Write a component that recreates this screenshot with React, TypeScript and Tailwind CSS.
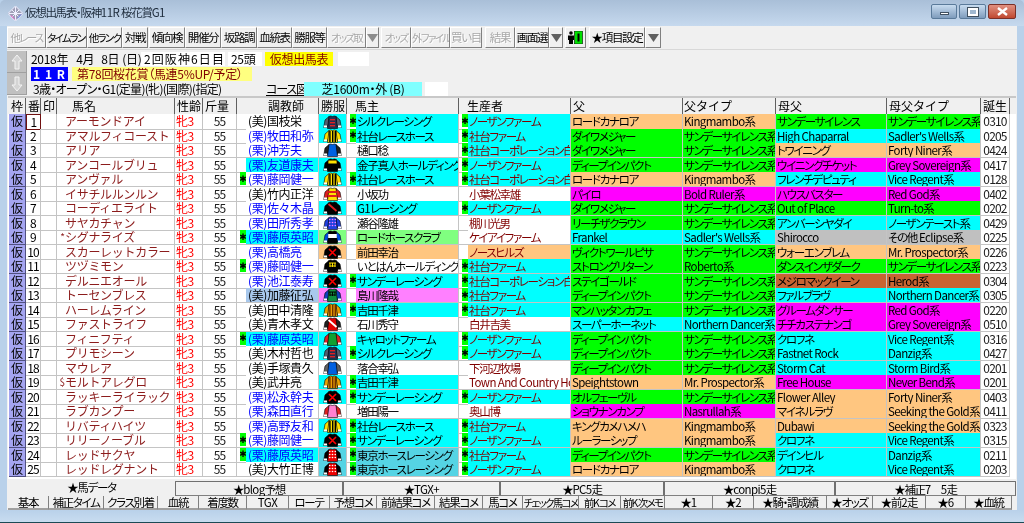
import { ReactNode } from 'react';

const BG: Record<string, string> = {
  w: 'bg-white',
  c: 'bg-[#00ffff]',
  g: 'bg-[#00ff00]',
  o: 'bg-[#ffc680]',
  m: 'bg-[#ff00ff]',
  s: 'bg-[#c0c0c0]',
  b: 'bg-[#c86432]',
  l: 'bg-[#80ff80]',
  p: 'bg-[#ff80ff]',
  d: 'bg-[#55d4e4]',
  a: 'bg-[#a8c8ec]',
};

const SS = 'サンデーサイレンス系';

type Pattern = 'stripe' | 'cross' | 'yoke' | 'hoop' | 'sash' | 'dots' | 'bars' | 'plain' | 'band' | 'check';

type Horse = {
  name: string;
  pre?: string;
  tr: string;
  trMark?: boolean;
  trBg?: string;
  silk: [string, string, Pattern, string];
  own: string;
  ownMark?: boolean;
  ownBg: string;
  br: string;
  brMark?: boolean;
  brBg?: string;
  si: string;
  siBg: string;
  st: string;
  bm: string;
  bmBg: string;
  bt: string;
  bd: string;
};

const NF = 'ノーザンファーム';
const SF = '社台ファーム';
const SC = '社台コーポレーション白老ファーム';

const stripes: [string, string, Pattern, string] = ['#ffe000', '#ffe000', 'stripe', '#000000'];
const redX: [string, string, Pattern, string] = ['#000000', '#000000', 'cross', '#ff0000'];
const redDots: [string, string, Pattern, string] = ['#ee0000', '#000000', 'dots', '#ffffff'];
const blue: [string, string, Pattern, string] = ['#0060e0', '#202020', 'plain', '#000000'];

const horses: Horse[] = [
  { name: 'アーモンドアイ', tr: '(美)国枝栄', silk: ['#203050', '#506070', 'bars', '#e02020'], own: 'シルクレーシング', ownMark: true, ownBg: 'c', br: NF, brMark: true, brBg: 'c', si: 'ロードカナロア', siBg: 'o', st: 'Kingmambo系', bm: 'サンデーサイレンス', bmBg: 'g', bt: SS, bd: '0310' },
  { name: 'アマルフィコースト', tr: '(栗)牧田和弥', silk: stripes, own: '社台レースホース', ownMark: true, ownBg: 'c', br: SF, brMark: true, brBg: 'c', si: 'ダイワメジャー', siBg: 'g', st: SS, bm: 'High Chaparral', bmBg: 'c', bt: "Sadler's Wells系", bd: '0205' },
  { name: 'アリア', tr: '(栗)沖芳夫', silk: blue, own: '樋口稔', ownBg: 'w', br: SC, brMark: true, brBg: 'c', si: 'ダイワメジャー', siBg: 'g', st: SS, bm: 'トワイニング', bmBg: 'o', bt: 'Forty Niner系', bd: '0424' },
  { name: 'アンコールブリュ', tr: '(栗)友道康夫', trBg: 'c', silk: ['#000000', '#000000', 'yoke', '#ffe000'], own: '金子真人ホールディングス', ownBg: 'c', br: NF, brMark: true, brBg: 'c', si: 'ディープインパクト', siBg: 'g', st: SS, bm: 'ウイニングチケット', bmBg: 'm', bt: 'Grey Sovereign系', bd: '0417' },
  { name: 'アンヴァル', tr: '(栗)藤岡健一', trMark: true, silk: stripes, own: '社台レースホース', ownMark: true, ownBg: 'c', br: SC, brMark: true, brBg: 'c', si: 'ロードカナロア', siBg: 'o', st: 'Kingmambo系', bm: 'フレンチデピュティ', bmBg: 'c', bt: 'Vice Regent系', bd: '0128' },
  { name: 'イサチルルンルン', tr: '(美)竹内正洋', silk: ['#ffe000', '#e02020', 'hoop', '#e02020'], own: '小坂功', ownBg: 'w', br: '小葉松幸雄', si: 'パイロ', siBg: 'm', st: 'Bold Ruler系', bm: 'ハウスバスター', bmBg: 'm', bt: 'Red God系', bd: '0402' },
  { name: 'コーディエライト', tr: '(栗)佐々木晶', silk: ['#000000', '#000000', 'sash', '#e02020'], own: 'G1レーシング', ownBg: 'c', br: NF, brMark: true, brBg: 'c', si: 'ダイワメジャー', siBg: 'g', st: SS, bm: 'Out of Place', bmBg: 'g', bt: 'Turn-to系', bd: '0202' },
  { name: 'サヤカチャン', tr: '(栗)田所秀孝', silk: ['#2040e0', '#2040e0', 'dots', '#ff80ff'], own: '瀬谷隆雄', ownBg: 'w', br: '棚川光男', si: 'リーチザクラウン', siBg: 'g', st: SS, bm: 'アンバーシヤダイ', bmBg: 'c', bt: 'ノーザンテースト系', bd: '0429' },
  { name: 'シグナライズ', pre: '*', tr: '(栗)藤原英昭', trMark: true, trBg: 'c', silk: ['#000000', '#0050e0', 'band', '#ffffff'], own: 'ロードホースクラブ', ownBg: 'l', br: 'ケイアイファーム', si: 'Frankel', siBg: 'c', st: "Sadler's Wells系", bm: 'Shirocco', bmBg: 's', bt: 'その他 Eclipse系', bd: '0225' },
  { name: 'スカーレットカラー', tr: '(栗)高橋亮', silk: redX, own: '前田幸治', ownBg: 'o', br: 'ノースヒルズ', brBg: 'o', si: 'ヴィクトワールピサ', siBg: 'g', st: SS, bm: 'ウォーエンブレム', bmBg: 'o', bt: 'Mr. Prospector系', bd: '0226' },
  { name: 'ツヅミモン', tr: '(栗)藤岡健一', trMark: true, silk: ['#000000', '#000000', 'check', '#ffe000'], own: 'いとはんホールディングス', ownBg: 'w', br: SF, brMark: true, brBg: 'c', si: 'ストロングリターン', siBg: 'g', st: 'Roberto系', bm: 'ダンスインザダーク', bmBg: 'g', bt: SS, bd: '0223' },
  { name: 'デルニエオール', tr: '(栗)池江泰寿', silk: redX, own: 'サンデーレーシング', ownMark: true, ownBg: 'c', br: SC, brMark: true, brBg: 'c', si: 'ステイゴールド', siBg: 'g', st: SS, bm: 'メジロマックイーン', bmBg: 'b', bt: 'Herod系', bd: '0304' },
  { name: 'トーセンブレス', tr: '(美)加藤征弘', trBg: 'a', silk: ['#109040', '#1040c0', 'check', '#000000'], own: '島川隆哉', ownBg: 'p', br: SF, brMark: true, brBg: 'c', si: 'ディープインパクト', siBg: 'g', st: SS, bm: 'ファルブラヴ', bmBg: 'c', bt: 'Northern Dancer系', bd: '0305' },
  { name: 'ハーレムライン', tr: '(美)田中清隆', silk: ['#e8a000', '#e8a000', 'stripe', '#703000'], own: '吉田千津', ownMark: true, ownBg: 'c', br: SF, brMark: true, brBg: 'c', si: 'マンハッタンカフェ', siBg: 'g', st: SS, bm: 'グルームダンサー', bmBg: 'm', bt: 'Red God系', bd: '0220' },
  { name: 'ファストライフ', tr: '(美)青木孝文', silk: ['#e00000', '#202020', 'sash', '#ffffff'], own: '石川秀守', ownBg: 'w', br: '白井吉美', si: 'スーパーホーネット', siBg: 'c', st: 'Northern Dancer系', bm: 'チチカステナンゴ', bmBg: 'm', bt: 'Grey Sovereign系', bd: '0510' },
  { name: 'フィニフティ', tr: '(栗)藤原英昭', trMark: true, trBg: 'c', silk: ['#10a030', '#e02020', 'plain', '#000000'], own: 'キャロットファーム', ownBg: 'c', br: NF, brMark: true, brBg: 'c', si: 'ディープインパクト', siBg: 'g', st: SS, bm: 'クロフネ', bmBg: 'c', bt: 'Vice Regent系', bd: '0316' },
  { name: 'プリモシーン', tr: '(美)木村哲也', silk: ['#203050', '#506070', 'bars', '#e02020'], own: 'シルクレーシング', ownMark: true, ownBg: 'c', br: NF, brMark: true, brBg: 'c', si: 'ディープインパクト', siBg: 'g', st: SS, bm: 'Fastnet Rock', bmBg: 'c', bt: 'Danzig系', bd: '0427' },
  { name: 'マウレア', tr: '(美)手塚貴久', silk: ['#0060e0', '#606060', 'plain', '#000000'], own: '落合幸弘', ownBg: 'w', br: '下河辺牧場', si: 'ディープインパクト', siBg: 'g', st: SS, bm: 'Storm Cat', bmBg: 'c', bt: 'Storm Bird系', bd: '0201' },
  { name: 'モルトアレグロ', pre: '$', tr: '(美)武井亮', silk: ['#e8a000', '#e8a000', 'stripe', '#703000'], own: '吉田千津', ownMark: true, ownBg: 'c', br: 'Town And Country Ho', si: 'Speightstown', siBg: 'o', st: 'Mr. Prospector系', bm: 'Free House', bmBg: 'm', bt: 'Never Bend系', bd: '0201' },
  { name: 'ラッキーライラック', tr: '(栗)松永幹夫', silk: redX, own: 'サンデーレーシング', ownMark: true, ownBg: 'c', br: NF, brMark: true, brBg: 'c', si: 'オルフェーヴル', siBg: 'g', st: SS, bm: 'Flower Alley', bmBg: 'o', bt: 'Forty Niner系', bd: '0403' },
  { name: 'ラブカンプー', tr: '(栗)森田直行', silk: ['#ff80d0', '#e02020', 'plain', '#000000'], own: '増田陽一', ownBg: 'w', br: '奥山博', si: 'ショウナンカンプ', siBg: 'm', st: 'Nasrullah系', bm: 'マイネルラヴ', bmBg: 'o', bt: 'Seeking the Gold系', bd: '0411' },
  { name: 'リバティハイツ', tr: '(栗)高野友和', silk: stripes, own: '社台レースホース', ownMark: true, ownBg: 'c', br: SF, brMark: true, brBg: 'c', si: 'キングカメハメハ', siBg: 'o', st: 'Kingmambo系', bm: 'Dubawi', bmBg: 'o', bt: 'Seeking the Gold系', bd: '0323' },
  { name: 'リリーノーブル', tr: '(栗)藤岡健一', trMark: true, silk: redX, own: 'サンデーレーシング', ownMark: true, ownBg: 'c', br: NF, brMark: true, brBg: 'c', si: 'ルーラーシップ', siBg: 'o', st: 'Kingmambo系', bm: 'クロフネ', bmBg: 'c', bt: 'Vice Regent系', bd: '0315' },
  { name: 'レッドサクヤ', tr: '(栗)藤原英昭', trMark: true, trBg: 'c', silk: redDots, own: '東京ホースレーシング', ownMark: true, ownBg: 'd', br: SF, brMark: true, brBg: 'c', si: 'ディープインパクト', siBg: 'g', st: SS, bm: 'デインヒル', bmBg: 'c', bt: 'Danzig系', bd: '0211' },
  { name: 'レッドレグナント', tr: '(美)大竹正博', silk: redDots, own: '東京ホースレーシング', ownMark: true, ownBg: 'd', br: NF, brMark: true, brBg: 'c', si: 'ロードカナロア', siBg: 'o', st: 'Kingmambo系', bm: 'クロフネ', bmBg: 'c', bt: 'Vice Regent系', bd: '0203' },
];

const COLS = 'grid grid-cols-[18px_15px_16px_118px_28px_34px_82px_28px_112px_112px_112px_93px_111px_94px_29px]';
const CELL = 'border-r border-b border-[#c4c4c4] overflow-hidden whitespace-nowrap';
const PROP = "[font-feature-settings:'palt'] text-[11.5px] tracking-[-1.3px]";
const TIGHT = "[font-feature-settings:'palt'] text-[10.5px] tracking-[-1.7px]";
const INFO = "[font-feature-settings:'palt'] tracking-[-0.3px]";

// latin runs keep wider spacing than the squeezed kana next to them
function Mixed({ text }: { text: string }) {
  return (
    <>
      {text.split(/([\x20-\x7e]+)/).map((part, i) =>
        i % 2 === 1 ? (
          <span key={i} className="tracking-[-0.6px]">
            {part}
          </span>
        ) : (
          part
        )
      )}
    </>
  );
}

function Silk({ data }: { data: Horse['silk'] }) {
  const [body, sleeve, pat, accent] = data;
  return (
    <svg width="19" height="14" viewBox="0 0 19 14">
      <path d="M6 1.5L2 5L.7 12.5H4L6 8Z" fill={sleeve} stroke="#000" strokeWidth=".6" />
      <path d="M13 1.5L17 5L18.3 12.5H15L13 8Z" fill={sleeve} stroke="#000" strokeWidth=".6" />
      <rect x=".8" y="10.5" width="3.2" height="2" fill="#fff" />
      <rect x="15" y="10.5" width="3.2" height="2" fill="#fff" />
      <path d="M6 1.5Q7.5.5 9.5 1.5Q11.5.5 13 1.5L14.5 13.5H4.5Z" fill={body} stroke="#000" strokeWidth=".6" />
      {pat === 'stripe' && (
        <>
          <rect x="6.2" y="2" width="1.4" height="11" fill={accent} />
          <rect x="9" y="2" width="1.4" height="11" fill={accent} />
          <rect x="11.6" y="2" width="1.4" height="11" fill={accent} />
        </>
      )}
      {pat === 'cross' && <path d="M6 4L13 11M13 4L6 11" stroke={accent} strokeWidth="1.6" />}
      {pat === 'sash' && <path d="M5.5 3L13.5 10" stroke={accent} strokeWidth="1.8" />}
      {pat === 'yoke' && <path d="M5.5 2.5H13.5L13.8 5.5H5.3Z" fill={accent} />}
      {pat === 'band' && <rect x="5.2" y="4" width="8.6" height="4" fill={accent} />}
      {pat === 'hoop' && (
        <>
          <rect x="5.2" y="4" width="8.6" height="2" fill={accent} />
          <rect x="5" y="8" width="9" height="2" fill={accent} />
        </>
      )}
      {pat === 'bars' && (
        <>
          <rect x="7" y="4" width="5" height="1.4" fill={accent} />
          <rect x="7" y="7" width="5" height="1.4" fill={accent} />
          <rect x="7" y="10" width="5" height="1.4" fill={accent} />
        </>
      )}
      {pat === 'dots' && (
        <>
          {[3.5, 6.5, 9.5].map((y) =>
            [6.7, 9.5, 12.3].map((x) => <circle key={`${x}-${y}`} cx={x} cy={y} r=".8" fill={accent} />)
          )}
        </>
      )}
      {pat === 'check' && (
        <path d="M6 4H13M6.5 7H12.5M7 4V8M9.5 4V8M12 4V8" stroke={accent} strokeWidth="1" fill="none" />
      )}
    </svg>
  );
}

function Mark({ on }: { on?: boolean }) {
  return (
    <span className="w-[9px] shrink-0 flex justify-end">
      {on && (
        <span className="w-[6px] h-[13px] bg-[#00ff00] text-black text-[9px] font-['DejaVu_Sans',sans-serif] flex items-center justify-center overflow-hidden">✱</span>
      )}
    </span>
  );
}

function ColorCell({ bg, text }: { bg: string; text: string }) {
  return (
    <div className={`${CELL} ${BG[bg]} pl-[1px] ${PROP}`}>
      <Mixed text={text} />
    </div>
  );
}

function MarkedCell({ mark, bg, text, color }: { mark?: boolean; bg?: string; text: string; color?: string }) {
  return (
    <div className={`${CELL} flex`}>
      <Mark on={mark} />
      <span className={`flex-1 min-w-0 overflow-hidden pl-[1px] ${BG[bg ?? 'w']} ${color ?? 'text-black'} ${PROP}`}>
        <Mixed text={text} />
      </span>
    </div>
  );
}

function HorseRow({ h, i }: { h: Horse; i: number }) {
  const kuri = h.tr.includes('栗');
  return (
    <div className={`${COLS} h-[14.52px] text-[12px] leading-[14px]`}>
      <div className="border-r border-b border-[#505080] bg-[#a4a4f0] text-center text-black ml-[1px]">仮</div>
      <div className={`text-center tracking-[-0.8px] ${i === 0 ? 'border border-[#701010]' : CELL}`}>{i + 1}</div>
      <div className={CELL}></div>
      <div className={`${CELL} flex text-[#8c1c1c]`}>
        <span className="w-[8px] shrink-0 text-right text-[10px]">{h.pre}</span>
        <span className="tracking-[-0.3px]">{h.name}</span>
      </div>
      <div className={`${CELL} text-[#ff0000] pl-[1px] tracking-[-0.5px]`}>牝3</div>
      <div className={`${CELL} text-center tracking-[-0.8px] text-[#202020]`}>55</div>
      <div className={`${CELL} flex`}>
        <Mark on={h.trMark} />
        <span className={`flex-1 pl-[2px] ${BG[h.trBg ?? 'w']} ${kuri ? 'text-[#0000ff]' : 'text-black'} tracking-[-0.4px]`}>
          {h.tr}
        </span>
      </div>
      <div className={`${CELL} ${BG[h.ownBg]} flex justify-center items-center`}>
        <Silk data={h.silk} />
      </div>
      <MarkedCell mark={h.ownMark} bg={h.ownBg} text={h.own} />
      <MarkedCell mark={h.brMark} bg={h.brBg} text={h.br} color="text-[#800000]" />
      <ColorCell bg={h.siBg} text={h.si} />
      <ColorCell bg={h.siBg} text={h.st} />
      <ColorCell bg={h.bmBg} text={h.bm} />
      <ColorCell bg={h.bmBg} text={h.bt} />
      <div className={`${CELL} bg-white text-center tracking-[-0.8px] text-[#202020]`}>{h.bd}</div>
    </div>
  );
}

function HeadCell({ label, pad }: { label?: string; pad: string }) {
  return (
    <div className={`h-full border-r border-[#606060] whitespace-nowrap overflow-hidden ${pad}`}>{label}</div>
  );
}

const BTN = 'h-[21px] shrink-0 bg-[#f0f0f0] border-t border-l border-white border-r border-b border-r-[#808080] border-b-[#808080] text-center whitespace-nowrap overflow-hidden leading-[19px]';
const DIS = 'text-[#a8a8a8] [text-shadow:1px_1px_0_#ffffff]';

function Btn({ w, on, label, tight }: { w: string; on?: boolean; label: string; tight?: boolean }) {
  return <div className={`${BTN} ${w} ${on ? 'text-black' : DIS} ${tight ? TIGHT : PROP}`}>{label}</div>;
}

function Drop({ w, on }: { w: string; on?: boolean }) {
  return (
    <div className={`${BTN} ${w} flex items-center justify-center`}>
      <svg width="11" height="8" viewBox="0 0 11 8">
        <path d="M0 0H11L5.5 8Z" fill={on ? '#606060' : '#8c8c8c'} />
      </svg>
    </div>
  );
}

function Arrow({ up }: { up?: boolean }) {
  return (
    <div className="h-[22px] w-[20px] bg-[#c0c0c0] border-b border-r border-[#a0a0a0] flex items-center justify-center">
      <svg width="12" height="16" viewBox="0 0 12 16" className={up ? '' : 'rotate-180'}>
        <path d="M6 1L11 7H8V15H4V7H1Z" fill="#d4d4d4" stroke="#f4f4f4" />
      </svg>
    </div>
  );
}

function Tab({ w, label, tight }: { w: string; label: string; tight?: boolean }) {
  return (
    <div className={`${w} h-[14px] shrink-0 bg-[#f0f0f0] border-r border-b-2 border-[#808080] border-b-[#a0a0a0] text-center leading-[13px] whitespace-nowrap overflow-hidden ${tight ? TIGHT : PROP}`}>
      <Mixed text={label} />
    </div>
  );
}

function TopTab({ w, label, active }: { w: string; label: string; active?: boolean }) {
  return (
    <div
      className={`${w} shrink-0 text-center leading-[15px] whitespace-nowrap ${PROP} ${
        active ? 'bg-[#f0f0f0]' : 'bg-[#f0f0f0] border border-[#707070] border-b-[#808080] mt-[1px] rounded-t-[1px]'
      }`}
    >
      <Mixed text={label} />
    </div>
  );
}

export default function App() {
  return (
    <div className="w-[1024px] h-[523px] flex flex-col overflow-hidden bg-[#b9d1ea] text-[12px] text-black font-['Noto_Sans_CJK_JP',sans-serif] blur-[0.35px]">
      <div className="h-[26px] shrink-0 flex items-center pl-[8px] rounded-t-[5px] bg-gradient-to-b from-[#a9bfd8] to-[#c6d9ee]">
        <svg width="15" height="15" viewBox="0 0 15 15" className="shrink-0">
          <path d="M7.5 0L15 7.5L7.5 15L0 7.5Z" fill="#a0a0b8" />
          <path d="M7.5 0L15 7.5L7.5 15L0 7.5ZM4 4L11 11M7.5 1V14M11 4L4 11M1 7.5H14" fill="none" stroke="#f0f0ff" strokeWidth="1" />
          <path d="M2 9L6 13L7.5 14L4 10Z" fill="#f040c0" />
          <path d="M9 13L13 9L14 7.5L10 11Z" fill="#4060e0" />
        </svg>
        <span className={`ml-[2px] text-[#1c2a3a] ${PROP}`}>
          <Mixed text="仮想出馬表・阪神11R 桜花賞G1" />
        </span>
        <div className="ml-auto mr-[8px] flex gap-[2px] mb-[3px]">
          <div className="w-[26px] h-[15px] rounded-[2px] border border-[#5a7a9a] bg-gradient-to-b from-[#c8dcf0] to-[#7f9cbc] flex items-end justify-center pb-[3px]">
            <div className="w-[9px] h-[3px] bg-white border border-[#405060]"></div>
          </div>
          <div className="w-[27px] h-[15px] rounded-[2px] border border-[#5a7a9a] bg-gradient-to-b from-[#c8dcf0] to-[#7f9cbc] flex items-center justify-center">
            <div className="w-[10px] h-[8px] bg-[#a0b8d0] border-2 border-white outline outline-1 outline-[#405060]"></div>
          </div>
          <div className="w-[28px] h-[15px] rounded-[2px] border border-[#7a3028] bg-gradient-to-b from-[#e09080] to-[#c04830] flex items-center justify-center">
            <svg width="11" height="9" viewBox="0 0 11 9">
              <path d="M1 1L10 8M10 1L1 8" stroke="#fff" strokeWidth="2.4" />
            </svg>
          </div>
        </div>
      </div>

      <div className="mx-[7px] flex flex-col h-[484px] shrink-0 bg-[#f0f0f0]">
        <div className="h-[24px] shrink-0 flex items-start pt-[1px] border-b border-[#d8d8d8]">
          <Btn w="w-[39px]" label="他レース" tight />
          <Btn w="w-[41px]" on label="タイムランク" tight />
          <Btn w="w-[35px]" on label="他ランク" tight />
          <Btn w="w-[26px]" on label="対戦" />
          <Btn w="w-[36px] ml-[1px]" on label="傾向検" />
          <Btn w="w-[36px]" on label="開催分" />
          <Btn w="w-[36px]" on label="坂路調" />
          <Btn w="w-[35px]" on label="血統表" />
          <Btn w="w-[35px]" on label="勝服等" />
          <Btn w="w-[39px]" label="オッズ取" tight />
          <Drop w="w-[13px]" />
          <Btn w="w-[30px] ml-[2px]" label="オッズ" tight />
          <Btn w="w-[39px]" label="外ファイル" tight />
          <Btn w="w-[32px]" label="買い目" />
          <Btn w="w-[30px] ml-[3px]" label="結果" />
          <Btn w="w-[34px]" on label="画面選" />
          <Drop w="w-[14px]" on />
          <div className={`${BTN} w-[21px] ml-[2px] flex items-center justify-center`}>
            <svg width="15" height="13" viewBox="0 0 15 13">
              <circle cx="3" cy="2" r="1.8" fill="#000" />
              <path d="M0 4.5H6V9H5V13H1V9H0Z" fill="#000" />
              <rect x="6.5" y="0" width="8" height="13" fill="#00e000" stroke="#000" strokeWidth=".6" />
              <rect x="9.5" y="2.5" width="2" height="8" fill="#000" />
            </svg>
          </div>
          <div className="w-[3px]"></div>
          <Btn w="w-[56px]" on label="★項目設定" />
          <Drop w="w-[16px]" on />
        </div>

        <div className="h-[46px] shrink-0 flex">
          <div className="w-[20px] shrink-0 flex flex-col pt-[1px]">
            <Arrow up />
            <Arrow />
          </div>
          <div className={`flex-1 flex flex-col pt-[2px] leading-[13px] ${INFO}`}>
            <div className="flex h-[14px] ml-[4px]">
              <div className="w-[110px] flex whitespace-nowrap">
                <span>2018年</span>
                <span className="ml-[8px]">4月</span>
                <span className="ml-[7px]">8日</span>
                <span className="ml-[3px]">(日)</span>
              </div>
              <span className="w-[84px] bg-white pl-[3px] tracking-[1.1px] whitespace-nowrap">2回阪神6日目</span>
              <span className="w-[34px] ml-[3px] bg-white pl-[3px] whitespace-nowrap">25頭</span>
              <span className="w-[68px] ml-[3px] bg-[#ffff00] text-[#800000] text-center">仮想出馬表</span>
              <span className="w-[31px] ml-[5px] bg-white"></span>
            </div>
            <div className="flex h-[14px] ml-[4px] mt-[1px]">
              <span className="w-[37px] bg-[#0000ff] text-white font-bold text-center tracking-[1px] whitespace-nowrap">1 1 R</span>
              <span className="w-[180px] ml-[4px] bg-[#ffff80] text-[#800000] pl-[5px] whitespace-nowrap">第78回桜花賞（馬連5%UP/予定）</span>
            </div>
            <div className="flex h-[14px] ml-[6px] mt-[1px]">
              <span className="w-[233px] tracking-[-0.7px] whitespace-nowrap">3歳・オープン・G1(定量)(牝)(国際)(指定)</span>
              <span className="w-[34px] underline whitespace-nowrap tracking-[-1.1px]">コース図</span>
              <span className="w-[118px] ml-[4px] bg-[#80ffff] text-center whitespace-nowrap">芝1600m・外 (B)</span>
              <span className="w-[23px] ml-[3px] bg-white"></span>
            </div>
          </div>
        </div>

        <div className="h-[383px] shrink-0 ml-[1px] mr-[1px] border-t-2 border-[#c8c8c8] bg-white flex flex-col">
          <div className={`${COLS} h-[16px] shrink-0 bg-[#f0f0f0] leading-[15px]`}>
            <HeadCell label="枠" pad="pl-[3px]" />
            <HeadCell label="番" pad="pl-[2px]" />
            <HeadCell label="印" pad="pl-[2px]" />
            <HeadCell label="馬名" pad="pl-[15px]" />
            <HeadCell label="性齢" pad="pl-[2px]" />
            <HeadCell label="斤量" pad="pl-[2px]" />
            <HeadCell label="調教師" pad="pl-[31px]" />
            <HeadCell label="勝服" pad="pl-[2px]" />
            <HeadCell label="馬主" pad="pl-[8px]" />
            <HeadCell label="生産者" pad="pl-[8px]" />
            <HeadCell label="父" pad="pl-[2px]" />
            <HeadCell label="父タイプ" pad="pl-[1px]" />
            <HeadCell label="母父" pad="pl-[2px]" />
            <HeadCell label="母父タイプ" pad="pl-[2px]" />
            <HeadCell label="誕生" pad="pl-[2px]" />
          </div>
          <div className="flex flex-col">
            {horses.map((h, i) => (
              <HorseRow key={h.name} h={h} i={i} />
            ))}
          </div>
        </div>

        <div className="flex h-[16px] shrink-0 mt-[1px] ml-[1px]">
          <TopTab w="w-[167px]" label="★馬データ" active />
          <TopTab w="w-[168px]" label="★blog予想" />
          <TopTab w="w-[157px]" label="★TGX+" />
          <TopTab w="w-[164px]" label="★PC5走" />
          <TopTab w="w-[171px]" label="★conpi5走" />
          <TopTab w="w-[181px]" label="★補正7　5走" />
        </div>
        <div className="flex flex-1 ml-[1px]">
          <Tab w="w-[41px]" label="基本" />
          <Tab w="w-[55px]" label="補正タイム" />
          <Tab w="w-[54px]" label="クラス別着" />
          <Tab w="w-[41px]" label="血統" />
          <Tab w="w-[48px]" label="着度数" />
          <Tab w="w-[42px]" label="TGX" />
          <Tab w="w-[41px]" label="ローテ" />
          <Tab w="w-[47px]" label="予想コメ" />
          <Tab w="w-[58px]" label="前結果コメ" />
          <Tab w="w-[48px]" label="結果コメ" />
          <Tab w="w-[40px]" label="馬コメ" />
          <Tab w="w-[56px]" label="チェック馬コメ" tight />
          <Tab w="w-[42px]" label="前Kコメ" tight />
          <Tab w="w-[44px]" label="前K次メモ" tight />
          <Tab w="w-[48px]" label="★1" />
          <Tab w="w-[41px]" label="★2" />
          <Tab w="w-[73px]" label="★騎・調成績" />
          <Tab w="w-[46px]" label="★オッズ" />
          <Tab w="w-[53px]" label="★前2走" />
          <Tab w="w-[40px]" label="★6" />
          <Tab w="w-[46px]" label="★血統" />
        </div>
      </div>

      <div className="flex-1 bg-gradient-to-b from-[#b9d1ea] to-[#c8dcf0] border-b border-[#1c4a55]"></div>
    </div>
  );
}
